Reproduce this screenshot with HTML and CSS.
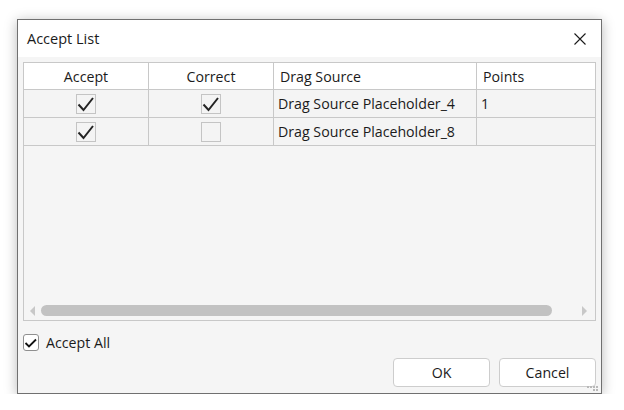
FILE: index.html
```html
<!DOCTYPE html>
<html>
<head>
<meta charset="utf-8">
<link rel="stylesheet" href="styles.css">
</head>
<body>
<div class="dialog">
  <div class="titlebar">
    <span class="title">Accept List</span>
    <svg class="close" width="12" height="12" viewBox="0 0 12 12"><path d="M0.5 0.5 L11.5 11.5 M11.5 0.5 L0.5 11.5" stroke="#1a1a1a" stroke-width="1.1" fill="none"/></svg>
  </div>
  <div class="content">
    <div class="grid">
      <div class="row head">
        <div class="cell c1 center">Accept</div>
        <div class="cell c2 center">Correct</div>
        <div class="cell c3 hpad">Drag Source</div>
        <div class="cell c4 hpad">Points</div>
      </div>
      <div class="row">
        <div class="cell c1 center"><span class="cbox"><svg width="20" height="20" viewBox="0 0 20 20"><polyline points="2.5,10.5 7.5,16 17,4" fill="none" stroke="#242424" stroke-width="2"/></svg></span></div>
        <div class="cell c2 center"><span class="cbox"><svg width="20" height="20" viewBox="0 0 20 20"><polyline points="2.5,10.5 7.5,16 17,4" fill="none" stroke="#242424" stroke-width="2"/></svg></span></div>
        <div class="cell c3 pad">Drag Source Placeholder_4</div>
        <div class="cell c4 pad">1</div>
      </div>
      <div class="row">
        <div class="cell c1 center"><span class="cbox"><svg width="20" height="20" viewBox="0 0 20 20"><polyline points="2.5,10.5 7.5,16 17,4" fill="none" stroke="#242424" stroke-width="2"/></svg></span></div>
        <div class="cell c2 center"><span class="cbox"></span></div>
        <div class="cell c3 pad">Drag Source Placeholder_8</div>
        <div class="cell c4 pad"></div>
      </div>
      <div class="spacer"></div>
      <div class="hscroll">
        <svg class="arrow" width="6" height="10" viewBox="0 0 6 10"><polygon points="5,0 0,5 5,10" fill="#c8c8c8"/></svg>
        <div class="thumb"></div>
        <svg class="arrow" width="6" height="10" viewBox="0 0 6 10"><polygon points="1,0 6,5 1,10" fill="#c8c8c8"/></svg>
      </div>
    </div>
    <label class="acceptall">
      <span class="cb16"><svg width="16" height="16" viewBox="0 0 16 16"><polyline points="2.5,8 6,11.5 13,4.5" fill="none" stroke="#111" stroke-width="1.8"/></svg></span>
      <span>Accept All</span>
    </label>
    <div class="buttons">
      <button class="btn">OK</button>
      <button class="btn">Cancel</button>
    </div>
  </div>
  <div class="grip">
    <i></i><i></i><i></i><i></i><i></i><i></i>
  </div>
</div>
</body>
</html>
```

FILE: styles.css
```css
html, body {
  margin: 0;
  padding: 0;
  background: #ffffff;
}
body {
  font-family: "Open Sans", "Noto Sans", sans-serif;
  font-size: 14.2px;
  color: #1b1b1b;
}
.dialog {
  position: relative;
  box-sizing: border-box;
  margin: 19px 0 0 17px;
  width: 585px;
  height: 375px;
  border: 1px solid #707070;
  background: #f5f5f5;
  box-shadow: 0 2px 12px rgba(0, 0, 0, 0.28);
  display: flex;
  flex-direction: column;
}
.titlebar {
  height: 37px;
  background: #ffffff;
  display: flex;
  align-items: center;
  justify-content: space-between;
  padding: 0 15px 0 9px;
  flex: none;
}
.title {
  font-size: 14.5px;
  padding-bottom: 1px;
}
.close {
  display: block;
}
.content {
  flex: 1;
  display: flex;
  flex-direction: column;
  padding: 5px 5px 6px 5px;
}
.grid {
  box-sizing: border-box;
  height: 259px;
  border: 1px solid #c8c8c8;
  display: flex;
  flex-direction: column;
  background: #f5f5f5;
}
.row {
  display: flex;
  height: 28px;
  border-bottom: 1px solid #c8c8c8;
  box-sizing: border-box;
  flex: none;
  background: #f4f4f4;
}
.row.head {
  height: 27px;
  background: #ffffff;
}
.cell {
  box-sizing: border-box;
  display: flex;
  align-items: center;
  border-right: 1px solid #c8c8c8;
  white-space: nowrap;
}
.c1 { width: 125px; }
.c2 { width: 125px; }
.c3 { width: 203px; }
.c4 { width: 118px; border-right: none; }
.center { justify-content: center; }
.hpad { padding-left: 6px; }
.pad { padding-left: 4px; }
.cbox {
  box-sizing: border-box;
  width: 20px;
  height: 20px;
  border: 1px solid #c4c4c4;
  display: block;
  position: relative;
}
.cbox svg {
  display: block;
  margin: -1px 0 0 -1px;
}
.spacer { flex: 1; }
.hscroll {
  height: 19px;
  display: flex;
  align-items: center;
  padding: 0 8px 0 6px;
  gap: 5px;
  flex: none;
}
.arrow { display: block; flex: none; }
.thumb {
  height: 11px;
  width: 511px;
  border-radius: 6px;
  background: #c2c2c2;
  margin-right: auto;
}
.acceptall {
  display: flex;
  align-items: center;
  gap: 7px;
  margin-top: 13px;
  height: 17px;
}
.cb16 {
  box-sizing: border-box;
  width: 16px;
  height: 17px;
  border: 1px solid #8f8f8f;
  border-radius: 3px;
  background: #ffffff;
  display: block;
}
.cb16 svg { display: block; margin: 0 0 0 -1px; }
.buttons {
  margin-top: auto;
  display: flex;
  justify-content: flex-end;
  gap: 9px;
}
.btn {
  box-sizing: border-box;
  width: 97px;
  height: 29px;
  border: 1px solid #cdcdcd;
  border-radius: 4px;
  background: #ffffff;
  font-family: inherit;
  font-size: 14.2px;
  color: #1b1b1b;
  padding: 0;
}
.grip {
  position: absolute;
  right: 3px;
  bottom: 2px;
  width: 11px;
  display: flex;
  flex-wrap: wrap;
  justify-content: flex-end;
  gap: 1px;
}
.grip i {
  display: block;
  width: 2px;
  height: 2px;
  background: #b8b8b8;
}
```
